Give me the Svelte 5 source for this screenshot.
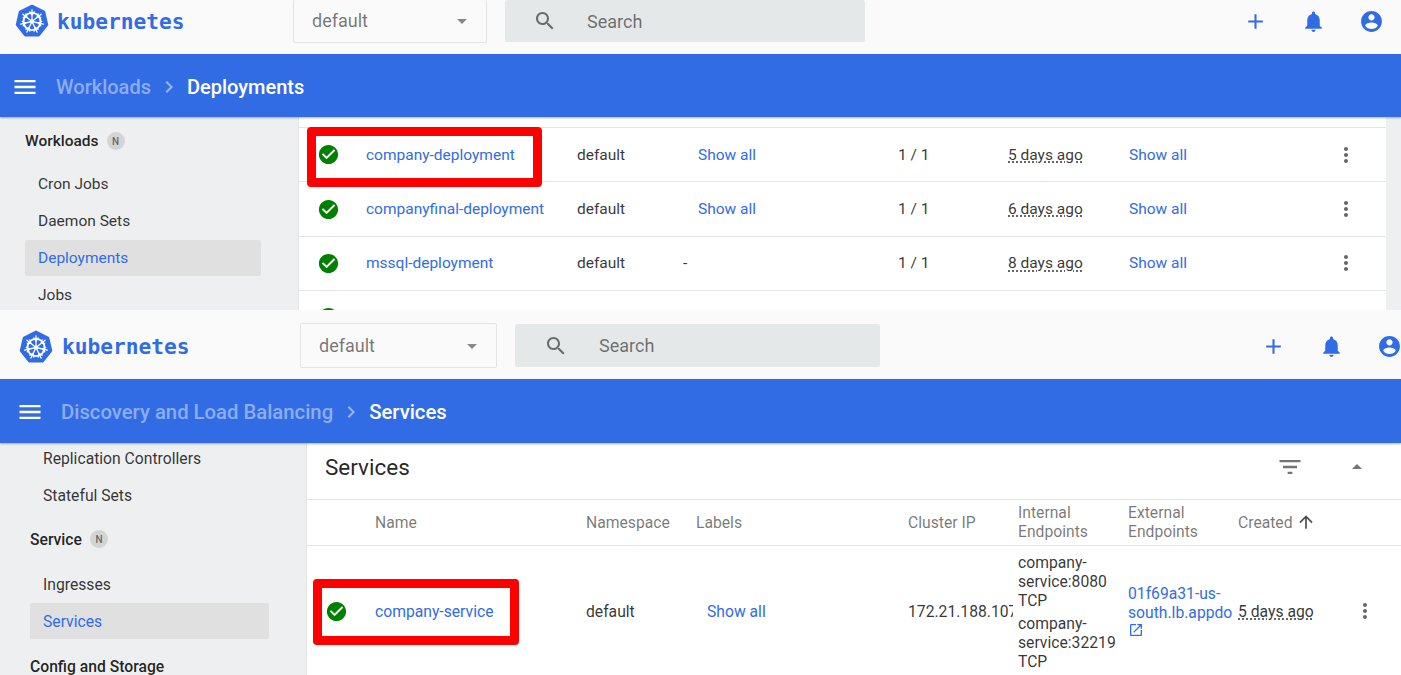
<script>
  const ICONS = {
    search: 'M15.5 14h-.79l-.28-.27C15.41 12.59 16 11.11 16 9.5 16 5.91 13.09 3 9.5 3S3 5.91 3 9.5 5.91 16 9.5 16c1.61 0 3.09-.59 4.23-1.57l.27.28v.79l5 4.99L20.49 19l-4.99-5zm-6 0C7.01 14 5 11.99 5 9.5S7.01 5 9.5 5 14 7.01 14 9.5 11.99 14 9.5 14z',
    add: 'M19 13h-6v6h-2v-6H5v-2h6V5h2v6h6v2z',
    bell: 'M12 22c1.1 0 2-.9 2-2h-4c0 1.1.89 2 2 2zm6-6v-5c0-3.07-1.64-5.64-4.5-6.32V4c0-.83-.67-1.5-1.5-1.5s-1.5.67-1.5 1.5v.68C7.63 5.36 6 7.92 6 11v5l-2 2v1h16v-1l-2-2z',
    account: 'M12 2C6.48 2 2 6.48 2 12s4.48 10 10 10 10-4.48 10-10S17.52 2 12 2zm0 3c1.66 0 3 1.34 3 3s-1.34 3-3 3-3-1.34-3-3 1.34-3 3-3zm0 14.2c-2.5 0-4.71-1.28-6-3.22.03-1.99 4-3.08 6-3.08 1.99 0 5.97 1.09 6 3.08-1.29 1.94-3.5 3.22-6 3.22z',
    menu: 'M3 18h18v-2H3v2zm0-5h18v-2H3v2zm0-7v2h18V6H3z',
    chevron: 'M10 6L8.59 7.41 13.17 12l-4.58 4.59L10 18l6-6z',
    check: 'M12 2C6.48 2 2 6.48 2 12s4.48 10 10 10 10-4.48 10-10S17.52 2 12 2zm-2 15l-5-5 1.41-1.41L10 14.17l7.59-7.59L19 8l-9 9z',
    more: 'M12 8c1.1 0 2-.9 2-2s-.9-2-2-2-2 .9-2 2 .9 2 2 2zm0 2c-1.1 0-2 .9-2 2s.9 2 2 2 2-.9 2-2-.9-2-2-2zm0 6c-1.1 0-2 .9-2 2s.9 2 2 2 2-.9 2-2-.9-2-2-2z',
    filter: 'M10 18h4v-2h-4v2zM3 6v2h18V6H3zm3 7h12v-2H6v2z',
    dropUp: 'M7 14l5-5 5 5z',
    dropDown: 'M7 10l5 5 5-5z',
    arrowUp: 'M4 12l1.41 1.41L11 7.83V20h2V7.83l5.58 5.59L20 12l-8-8-8 8z',
    open: 'M19 19H5V5h7V3H5c-1.11 0-2 .9-2 2v14c0 1.1.89 2 2 2h14c1.1 0 2-.9 2-2v-7h-2v7zM14 3v2h3.59l-9.83 9.83 1.41 1.41L19 6.41V10h2V3h-7z'
  };

  const deployments = [
    { name: 'company-deployment', labels: true, age: '5 days ago', boxed: true },
    { name: 'companyfinal-deployment', labels: true, age: '6 days ago' },
    { name: 'mssql-deployment', labels: false, age: '8 days ago' }
  ];

  const spokes = [0, 51.43, 102.86, 154.29, 205.71, 257.14, 308.57];
</script>

{#snippet icon(name, cls = '')}
  <svg class="icon {cls}" viewBox="0 0 24 24" aria-hidden="true"><path d={ICONS[name]} /></svg>
{/snippet}

{#snippet logo()}
  <div class="logo">
    <svg class="wheel" viewBox="0 0 34 34" aria-hidden="true">
      <path class="hept" d="M17 2 L29 7.8 L32 20.8 L23.7 31.2 H10.3 L2 20.8 L5 7.8 Z" />
      <g class="helm">
        <circle cx="17" cy="17.5" r="8.6" />
        {#each spokes as a}
          <path d="M17 17.5 V5.8" transform="rotate({a} 17 17.5)" />
          <path d="M17 11 L14.8 8 M17 11 L19.2 8" transform="rotate({a} 17 17.5)" />
        {/each}
        <circle class="hub" cx="17" cy="17.5" r="2" />
      </g>
    </svg>
    <span class="word">kubernetes</span>
  </div>
{/snippet}

{#snippet toolbar()}
  <header class="toolbar">
    {@render logo()}
    <div class="select">
      <span>default</span>
      {@render icon('dropDown', 'caret')}
    </div>
    <div class="search">
      {@render icon('search', 'glass')}
      <span>Search</span>
    </div>
    <div class="actions">
      {@render icon('add')}
      {@render icon('bell')}
      {@render icon('account')}
    </div>
  </header>
{/snippet}

{#snippet crumbs(parent, current)}
  <div class="crumbs">
    {@render icon('menu', 'burger')}
    <span class="parent">{parent}</span>
    {@render icon('chevron', 'sep')}
    <span class="current">{current}</span>
  </div>
{/snippet}

{#snippet group(label)}
  <div class="group">{label}<span class="badge">N</span></div>
{/snippet}

<main class="page">
  <section class="panel first">
    {@render toolbar()}
    {@render crumbs('Workloads', 'Deployments')}
    <div class="body">
      <nav class="side">
        {@render group('Workloads')}
        <a class="item">Cron Jobs</a>
        <a class="item">Daemon Sets</a>
        <a class="item on">Deployments</a>
        <a class="item">Jobs</a>
      </nav>
      <div class="content">
        <div class="rows">
          {#each deployments as d}
            <div class="row">
              {@render icon('check', 'ok')}
              <a class="link">{d.name}</a>
              <span>default</span>
              {#if d.labels}<a class="link labels">Show all</a>{:else}<span>-</span>{/if}
              <span>1 / 1</span>
              <span><abbr>{d.age}</abbr></span>
              <a class="link">Show all</a>
              {@render icon('more', 'dots')}
              {#if d.boxed}<div class="mark"></div>{/if}
            </div>
          {/each}
          <div class="row">{@render icon('check', 'ok')}</div>
        </div>
        <div class="track"></div>
      </div>
    </div>
  </section>

  <section class="panel second">
    {@render toolbar()}
    {@render crumbs('Discovery and Load Balancing', 'Services')}
    <div class="body">
      <nav class="side">
        <a class="item">Replication Controllers</a>
        <a class="item">Stateful Sets</a>
        {@render group('Service')}
        <a class="item">Ingresses</a>
        <a class="item on">Services</a>
        <div class="group plain">Config and Storage</div>
      </nav>
      <div class="content">
        <div class="card">
          <div class="card-head">
            <h2>Services</h2>
            {@render icon('filter', 'filter')}
            {@render icon('dropUp', 'collapse')}
          </div>
          <div class="thead">
            <span></span>
            <span>Name</span>
            <span>Namespace</span>
            <span>Labels</span>
            <span>Cluster IP</span>
            <span>Internal Endpoints</span>
            <span>External Endpoints</span>
            <span class="sorted">Created {@render icon('arrowUp', 'sort')}</span>
          </div>
          <div class="svc">
            {@render icon('check', 'ok')}
            <a class="link">company-service</a>
            <span>default</span>
            <a class="link labels">Show all</a>
            <span class="ip">172.21.188.107</span>
            <div class="endpoints">
              <p>company-service:8080 TCP</p>
              <p>company-service:32219 TCP</p>
            </div>
            <div class="external">
              <a class="link">01f69a31-us-south.lb.appdomain.cloud</a>
              {@render icon('open', 'ext')}
            </div>
            <span class="age"><abbr>5 days ago</abbr></span>
            {@render icon('more', 'dots')}
            <div class="mark"></div>
          </div>
        </div>
      </div>
    </div>
  </section>
</main>

<style>
  :global(body) {
    margin: 0;
    background: #fafafa;
  }

  .page {
    width: 1401px;
    height: 675px;
    overflow: hidden;
    font-family: Roboto, "Liberation Sans", sans-serif;
    font-size: 15.5px;
    color: rgba(0, 0, 0, 0.8);
  }

  .panel {
    display: flex;
    flex-direction: column;
    overflow: hidden;
  }
  .first { height: 310px; margin-bottom: 4px; }
  .second { height: 361px; font-size: 15.7px; }

  .icon {
    display: block;
    flex: none;
    width: 24px;
    height: 24px;
    fill: currentColor;
  }

  /* top bar */
  .toolbar {
    display: flex;
    align-items: center;
    flex: none;
    box-sizing: border-box;
    height: 54px;
    background: #fafafa;
    color: #326ce5;
  }
  .second .toolbar { height: 65px; padding-bottom: 2px; }

  .logo {
    display: flex;
    align-items: center;
    gap: 8px;
    width: 293px;
    padding: 0 0 12px 15px;
    box-sizing: border-box;
  }
  .second .logo { width: 300px; padding: 4px 0 2px 19px; gap: 9px; }
  .wheel { width: 34px; height: 34px; flex: none; }
  .hept { fill: #326ce5; stroke: #326ce5; stroke-width: 2.5; stroke-linejoin: round; }
  .helm circle { fill: none; stroke: #fff; stroke-width: 1.8; }
  .helm path { fill: none; stroke: #fff; stroke-width: 1.3; stroke-linecap: round; }
  .helm .hub { fill: #fff; stroke: none; }
  .word {
    font-family: "DejaVu Sans Mono", monospace;
    font-weight: 700;
    font-size: 21.2px;
  }

  .select {
    display: flex;
    align-items: center;
    justify-content: space-between;
    box-sizing: border-box;
    width: 194px;
    height: 43px;
    margin: -12px 18px 0 0;
    padding: 0 12px 0 18px;
    border: 1px solid #e4e4e4;
    border-top: 0;
    border-radius: 2px;
    font-size: 18px;
    color: rgba(0, 0, 0, 0.54);
  }
  .second .select {
    width: 197px;
    height: 45px;
    margin: 0 18px 0 0;
    border-top: 1px solid #e4e4e4;
  }
  .caret { color: #888; }

  .search {
    display: flex;
    align-items: center;
    box-sizing: border-box;
    width: 360px;
    height: 42px;
    margin-top: -12px;
    padding-left: 28px;
    background: #e5e8e9;
    border-radius: 2px;
    font-size: 18px;
    color: rgba(0, 0, 0, 0.54);
  }
  .second .search { width: 365px; height: 43px; margin-top: 0; padding-left: 29px; }
  .glass { margin-right: 30px; }
  .second .glass { margin-right: 31px; }

  .actions {
    display: flex;
    gap: 33px;
    margin-left: auto;
    padding: 0 17px 12px 0;
  }
  .second .actions { padding: 2px 0 0; margin-right: -1px; }
  .actions .icon { width: 25px; height: 25px; }

  /* blue breadcrumb bar */
  .crumbs {
    display: flex;
    align-items: center;
    flex: none;
    box-sizing: border-box;
    height: 63px;
    padding: 2px 0 0 10.5px;
    background: #326ce5;
    box-shadow: 0 1px 2px rgba(0, 0, 0, 0.3);
    position: relative;
    font-size: 20px;
    font-weight: 500;
    color: #fff;
  }
  .second .crumbs { height: 64px; padding-left: 15.5px; font-size: 20.3px; }
  .burger { width: 28px; height: 28px; margin-right: 17.5px; }
  .parent { color: rgba(255, 255, 255, 0.45); }
  .sep { margin: 0 6px; color: rgba(255, 255, 255, 0.5); }

  .body {
    display: flex;
    flex: 1;
    min-height: 0;
  }

  /* left nav */
  .side {
    display: flex;
    flex-direction: column;
    flex: none;
    box-sizing: border-box;
    width: 299px;
    padding: 6px 37px 0 25px;
    background: #eeeff1;
    border-right: 1px solid #e4e4e4;
  }
  .second .side { width: 307px; padding: 0 37px 0 30px; }
  .second .side > :first-child { margin-top: -3px; }
  .group {
    display: flex;
    align-items: center;
    flex: none;
    height: 36px;
    margin-bottom: 7px;
    font-weight: 500;
    color: rgba(0, 0, 0, 0.87);
  }
  .second .group { margin-top: 7px; margin-bottom: 9px; }
  .second .plain { margin-top: 8px; }
  .badge {
    display: grid;
    place-items: center;
    width: 18px;
    height: 18px;
    margin-left: 8px;
    border-radius: 50%;
    background: #d4d4d4;
    font-size: 10px;
    color: rgba(0, 0, 0, 0.54);
  }
  .item {
    display: flex;
    align-items: center;
    flex: none;
    height: 36px;
    margin-bottom: 1px;
    padding-left: 13px;
    border-radius: 2px;
  }
  .on { background: #e0e0e0; color: #326ce5; }

  /* tables */
  .content {
    display: flex;
    flex: 1;
    min-width: 0;
    background: #fff;
  }
  .track { flex: none; width: 15px; background: #eeeff1; }
  .rows { flex: 1; min-width: 0; padding-top: 10px; }
  .card { flex: 1; min-width: 0; }

  .row, .thead, .svc {
    position: relative;
    display: grid;
    align-items: center;
  }
  .row {
    grid-template-columns: 67px 211px 106px 215px 110px 121px 1fr 52px;
    box-sizing: border-box;
    height: 54.4px;
    border-top: 1px solid #e4e4e4;
  }

  .link { color: #326ce5; }
  .row .labels { margin-left: 15px; }
  .ok {
    width: 23px;
    height: 23px;
    margin-left: 18px;
    color: #008000;
    background: radial-gradient(circle, #fff 55%, transparent 57%);
  }
  .dots { color: rgba(0, 0, 0, 0.6); }

  abbr {
    text-decoration: underline dotted;
    text-underline-offset: 2px;
  }

  .mark {
    position: absolute;
    z-index: 1;
    box-sizing: border-box;
    top: -1px;
    left: 8px;
    width: 235px;
    height: 60px;
    border: 9px solid #f00;
    border-radius: 4px;
    pointer-events: none;
  }

  .card-head {
    display: flex;
    align-items: center;
    box-sizing: border-box;
    height: 57px;
    padding: 0 32px 9px 18px;
    border-bottom: 1px solid #e4e4e4;
  }
  h2 {
    flex: 1;
    margin: 0;
    font-size: 22.5px;
    font-weight: 400;
    color: rgba(0, 0, 0, 0.87);
  }
  .filter { color: rgba(0, 0, 0, 0.54); width: 28px; height: 28px; margin-right: 41px; }
  .collapse { color: rgba(0, 0, 0, 0.54); }

  .svc {
    grid-template-columns: 68px 211px 110px 212px 110px 110px 110px 1fr 48px;
  }
  .thead {
    grid-template-columns: 68px 211px 110px 212px 110px 110px 110px 1fr;
    box-sizing: border-box;
    height: 46px;
    padding-bottom: 1px;
    border-bottom: 1px solid #e4e4e4;
    line-height: 19px;
    color: rgba(0, 0, 0, 0.54);
  }
  .thead > span:nth-child(6), .thead > span:nth-child(7) { padding-right: 30px; }
  .sorted { display: flex; align-items: center; gap: 3px; }
  .sort { width: 20px; height: 20px; color: rgba(0, 0, 0, 0.7); }

  .svc { height: 130px; line-height: 19px; }
  .svc .labels { margin-left: 11px; }
  .ip { overflow: hidden; white-space: nowrap; margin-right: 5px; }
  .endpoints { padding-top: 6px; }
  .endpoints p { margin: 0 0 4px; width: 100px; overflow-wrap: anywhere; }
  .external { min-width: 0; overflow: hidden; width: 105px; }
  .external .link { display: block; width: 130px; max-height: 38px; overflow: hidden; }
  .ext { width: 16px; height: 16px; color: #326ce5; }
  .age { white-space: nowrap; }
  .svc .mark { top: 33px; left: 6px; width: 206px; height: 66px; }
</style>
